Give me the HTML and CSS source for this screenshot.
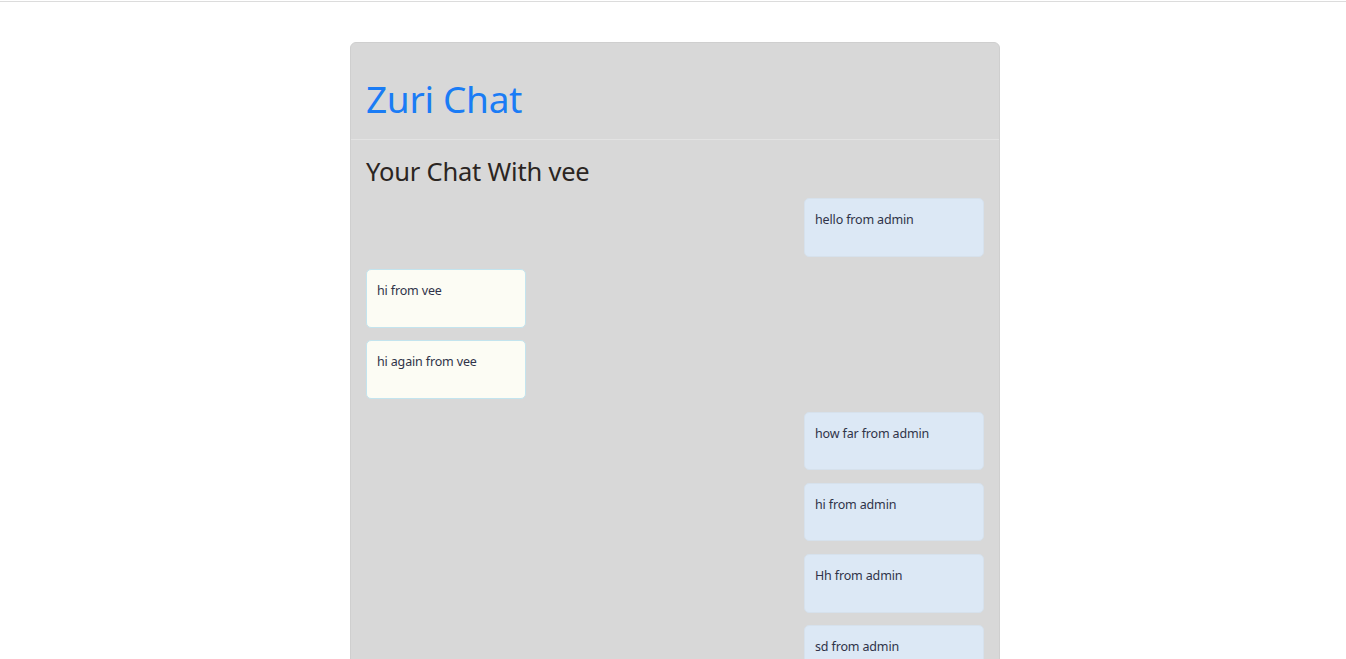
FILE: index.html
```html
<!DOCTYPE html>
<html>
<head>
<meta charset="utf-8">
<link rel="stylesheet" href="styles.css">
</head>
<body>
<div class="topline"></div>
<div class="page">
  <div class="card">
    <div class="card-header">
      <h1 class="brand">Zuri Chat</h1>
    </div>
    <div class="card-body">
      <h2 class="chat-title">Your Chat With vee</h2>
      <div class="messages">
        <div class="msg admin">hello from admin</div>
        <div class="msg user">hi from vee</div>
        <div class="msg user">hi again from vee</div>
        <div class="msg admin">how far from admin</div>
        <div class="msg admin">hi from admin</div>
        <div class="msg admin">Hh from admin</div>
        <div class="msg admin">sd from admin</div>
      </div>
    </div>
  </div>
</div>
</body>
</html>
```

FILE: styles.css
```css
* { box-sizing: border-box; }
html, body { margin: 0; padding: 0; background: #fff; }
body {
  font-family: "Noto Sans", "Open Sans", sans-serif;
  color: #212529;
  overflow: hidden;
}
.topline {
  margin-top: 1px;
  height: 1px;
  background: #dcdcdc;
}
.page {
  padding-top: 40px;
  padding-left: 4px;
}
.card {
  width: 650px;
  margin: 0 auto;
  background: #d8d8d8;
  border: 1px solid #cfcfcf;
  border-radius: 6px;
  min-height: 700px;
}
.card-header {
  height: 97px;
  border-bottom: 1px solid #e3e3e3;
  padding: 32px 15px 0;
}
.brand {
  margin: 0;
  font-weight: 400;
  font-size: 37px;
  line-height: 48px;
  color: #1a7cf5;
  letter-spacing: -0.3px;
}
.card-body {
  padding: 14px 15px 0;
}
.chat-title {
  margin: 0 0 9px;
  font-weight: 400;
  font-size: 25.5px;
  line-height: 35px;
  color: #2b2522;
  letter-spacing: -0.2px;
}
.messages {
  display: flex;
  flex-direction: column;
  gap: 12.6px;
}
.msg {
  height: 58.6px;
  padding: 12px 10px;
  font-size: 12.5px;
  line-height: 18px;
  color: #2f3348;
  border-radius: 5px;
  letter-spacing: -0.15px;
}
.msg.admin {
  width: 180px;
  align-self: flex-end;
  background: #dce8f5;
  border: 1px solid #d6e1ec;
}
.msg.user {
  width: 160px;
  align-self: flex-start;
  background: #fcfcf4;
  border: 1px solid #c3e4ee;
}
```
